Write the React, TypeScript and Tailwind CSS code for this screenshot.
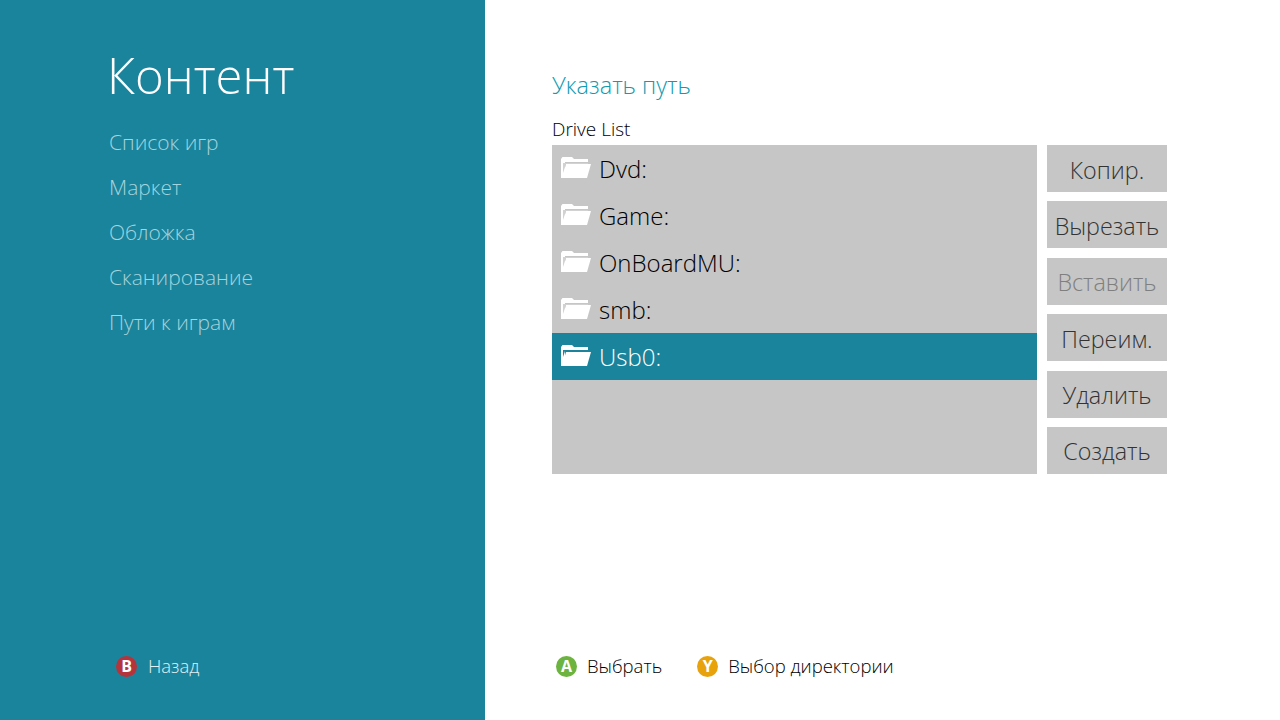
const navItems = ["Список игр", "Маркет", "Обложка", "Сканирование", "Пути к играм"];
const drives = ["Dvd:", "Game:", "OnBoardMU:", "smb:", "Usb0:"];
const actions = ["Копир.", "Вырезать", "Вставить", "Переим.", "Удалить", "Создать"];

const FolderIcon = ({ selected }: { selected: boolean }) => (
  <svg width="30" height="21" viewBox="0 0 30 21" className="mb-[2px] shrink-0">
    <path d="M0 2 L1.5 0 H11 L13 2 H27 V5 H0 Z" fill="#fff" />
    <path d="M0 5 H4 V21 H0 Z" fill="#fff" />
    <path
      d="M1 20.5 L5 7 H30 L26 21 H1 Z"
      fill="#fff"
    />
    {selected ? (
      <path d="M2 5 H27 V6 H4 L2 12 Z" fill="#1a849c" />
    ) : (
      <path d="M2 6 H27 V7 H5 L2 16 Z" fill="#d2d2d2" />
    )}
  </svg>
);

const PadButton = ({ letter, color }: { letter: string; color: string }) => (
  <span
    className={`flex h-[21px] w-[21px] shrink-0 items-center justify-center rounded-full text-[16px] font-bold leading-none text-white ${color}`}
  >
    {letter}
  </span>
);

export default function App() {
  return (
    <div className="flex h-[720px] w-[1280px] overflow-hidden bg-white font-['Open_Sans',sans-serif] font-light">
      {/* Left menu */}
      <div className="flex w-[485px] flex-col bg-[#1a849c] pl-[108px] text-white">
        <h1 className="mt-[41px] -ml-[1px] text-[49px] font-light leading-[68px]">Контент</h1>
        <div className="mt-[11px] flex flex-col pl-[1px]">
          {navItems.map((item) => (
            <div key={item} className="h-[45px] text-[21px] leading-[45px] text-[#a5d3dd]">
              {item}
            </div>
          ))}
        </div>
        <div className="mt-auto mb-[43px] ml-[8px] flex items-center gap-[11px]">
          <PadButton letter="B" color="bg-[#b5343c]" />
          <span className="text-[18.5px] leading-[22px] text-[#e0f0f3]">Назад</span>
        </div>
      </div>

      {/* Right panel */}
      <div className="flex flex-1 flex-col pl-[67px]">
        <h2 className="mt-[69px] text-[23.5px] font-light leading-[32px] text-[#0f9bb0]">Указать путь</h2>
        <div className="mt-[17px] text-[19px] leading-[23px] text-black">Drive List</div>
        <div className="mt-[4px] flex h-[329px] gap-[10px]">
          <div className="w-[485px] bg-[#c6c6c6]">
            {drives.map((drive) => {
              const selected = drive === "Usb0:";
              return (
                <div
                  key={drive}
                  className={`flex h-[47px] items-center gap-[8px] pl-[9px] text-[24px] ${selected ? "bg-[#1a849c] text-white" : "text-black"}`}
                >
                  <FolderIcon selected={selected} />
                  <span>{drive}</span>
                </div>
              );
            })}
          </div>
          <div className="flex w-[120px] flex-col justify-between">
            {actions.map((action) => (
              <div
                key={action}
                className={`flex h-[47px] items-center justify-center bg-[#c6c6c6] pt-[3px] text-[23.3px] ${action === "Вставить" ? "text-[#7f7f7f]" : "text-[#333333]"}`}
              >
                {action}
              </div>
            ))}
          </div>
        </div>
        <div className="mt-auto mb-[43px] ml-[4px] flex items-center text-[18.5px] leading-[22px] text-black">
          <PadButton letter="A" color="bg-[#6cb33f]" />
          <span className="ml-[10px]">Выбрать</span>
          <span className="ml-[35px]">
            <PadButton letter="Y" color="bg-[#e8a30c]" />
          </span>
          <span className="ml-[10px]">Выбор директории</span>
        </div>
      </div>
    </div>
  );
}
